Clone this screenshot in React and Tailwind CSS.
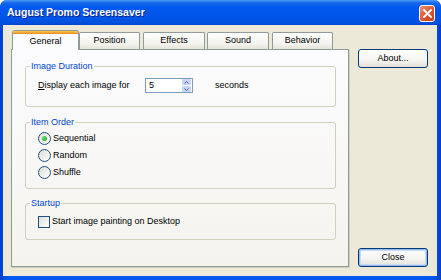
import React from 'react'

const font = "font-['Liberation_Sans',Arial,sans-serif]"

function Tab({ label, active, className = '' }) {
  if (active) {
    return (
      <div className={`relative z-10 -mb-[1px] h-[20px] w-[67px] rounded-t-[3px] border border-b-0 border-[#919B9C] bg-[#FCFCFE] ${className}`}>
        <div className="h-[3px] rounded-t-[2px] bg-[linear-gradient(to_bottom,#FFC83C,#E68B2C)]" />
        <div className="flex h-[16px] items-center justify-center text-[9px] text-black">{label}</div>
      </div>
    )
  }
  return (
    <div className={`flex h-[17px] items-center justify-center rounded-t-[2px] border border-b-0 border-[#919B9C] bg-[linear-gradient(to_bottom,#FFFFFF,#F3F2EC_70%,#E4E2D8)] text-[9px] text-black ${className}`}>
      {label}
    </div>
  )
}

function Group({ label, className = '', children }) {
  return (
    <fieldset className={`rounded-[3px] border border-[#D0D0BF] pl-[4px] ${className}`}>
      <legend className="px-[1px] text-[9px] leading-[12px] text-[#0046D5]">{label}</legend>
      {children}
    </fieldset>
  )
}

function Radio({ label, checked }) {
  return (
    <div className="ml-[8px] flex h-[17px] items-center">
      <span className="flex h-[13px] w-[13px] items-center justify-center rounded-full border border-[#1C5180] bg-[linear-gradient(135deg,#DCDCD7,#FFFFFF)]">
        {checked && <span className="h-[5px] w-[5px] rounded-full bg-[radial-gradient(circle_at_35%_35%,#6BD66B,#21A121)]" />}
      </span>
      <span className="ml-[2px] text-[9px] text-black">{label}</span>
    </div>
  )
}

function XpButton({ label, isDefault }) {
  return (
    <div className={`flex h-[19px] items-center justify-center rounded-[3px] border border-[#003C74] bg-[linear-gradient(to_bottom,#FFFFFF,#F4F4F0_60%,#E3E1D7)] text-[9px] text-black ${isDefault ? 'shadow-[inset_0_0_0_1px_#98B8F0,inset_0_0_0_2px_#C9DAF8]' : ''}`}>
      {label}
    </div>
  )
}

export default function App() {
  return (
    <div className={`flex h-[280px] w-[441px] flex-col overflow-hidden rounded-t-[7px] bg-[linear-gradient(to_right,#0040D0,#0058EE_2%,#0058EE_98%,#0040D0)] ${font}`}>
      {/* Title bar */}
      <div className="flex h-[25px] shrink-0 items-center justify-between bg-[linear-gradient(to_bottom,#4A9AF8_0%,#1568E8_12%,#0058EE_30%,#0055E8_70%,#0050DE_90%,#0043CF_100%)] pl-[7px] pr-[6px]">
        <span className="text-[10.5px] font-bold text-white [text-shadow:1px_1px_0_#0A1E8C]">August Promo Screensaver</span>
        <div className="mt-[1px] flex h-[17px] w-[16px] items-center justify-center rounded-[3px] border border-white bg-[linear-gradient(135deg,#EE9070,#D9562F_55%,#C0401E)]">
          <svg width="9" height="9" viewBox="0 0 9 9">
            <path d="M1 1 L8 8 M8 1 L1 8" stroke="white" strokeWidth="1.8" strokeLinecap="round" />
          </svg>
        </div>
      </div>

      {/* Body */}
      <div className="ml-[3px] mr-[4px] mb-[4px] flex flex-1 bg-[#ECE9D8] pb-[9px] pl-[8px] pr-[9px] pt-[5px]">
        <div className="flex w-[338px] flex-col">
          <div className="flex h-[19px] items-end pl-[1px]">
            <Tab label="General" active />
            <Tab label="Position" className="w-[61px]" />
            <Tab label="Effects" className="ml-[3px] w-[62px]" />
            <Tab label="Sound" className="ml-[2px] w-[62px]" />
            <Tab label="Behavior" className="ml-[3px] w-[61px]" />
          </div>
          <div className="h-[218px] border border-[#919B9C] bg-[linear-gradient(to_bottom,#FCFCFE,#F4F3EE)] pl-[13px] pr-[12px] pt-[10px] shadow-[1px_1px_0_#D0CEBF]">
            <Group label="Image Duration" className="pb-[13px] pt-[6px]">
              <div className="ml-[8px] flex h-[15px] items-center text-[9px] text-black">
                <span className="w-[107px]"><span className="underline">D</span>isplay each image for</span>
                <div className="flex h-[15px] w-[48px] items-center border border-[#7F9DB9] bg-white pl-[3px] pr-[1px]">
                  <span className="flex-1">5</span>
                  <div className="flex h-[13px] w-[9px] flex-col gap-[1px]">
                    <div className="flex flex-1 items-center justify-center rounded-[1px] bg-[#C6D6FA]">
                      <svg width="5" height="3" viewBox="0 0 5 3"><path d="M0.5 2.5 L2.5 0.5 L4.5 2.5" stroke="#4D6185" strokeWidth="1" fill="none" /></svg>
                    </div>
                    <div className="flex flex-1 items-center justify-center rounded-[1px] bg-[#C6D6FA]">
                      <svg width="5" height="3" viewBox="0 0 5 3"><path d="M0.5 0.5 L2.5 2.5 L4.5 0.5" stroke="#4D6185" strokeWidth="1" fill="none" /></svg>
                    </div>
                  </div>
                </div>
                <span className="ml-[22px]">seconds</span>
              </div>
            </Group>
            <Group label="Item Order" className="mt-[9px] pb-[7px] pt-[2px]">
              <Radio label="Sequential" checked />
              <Radio label="Random" />
              <Radio label="Shuffle" />
            </Group>
            <Group label="Startup" className="mt-[8px] pb-[10px] pt-[6px]">
              <div className="ml-[8px] flex h-[14px] items-center">
                <span className="h-[12px] w-[12px] border border-[#1C5180] bg-[linear-gradient(135deg,#DCDCD7,#FFFFFF)]" />
                <span className="ml-[2px] text-[9px] text-black">Start image painting on Desktop</span>
              </div>
            </Group>
          </div>
        </div>
        <div className="ml-[9px] flex w-[70px] flex-col justify-between pt-[19px]">
          <XpButton label="About..." />
          <XpButton label="Close" isDefault />
        </div>
      </div>
    </div>
  )
}
